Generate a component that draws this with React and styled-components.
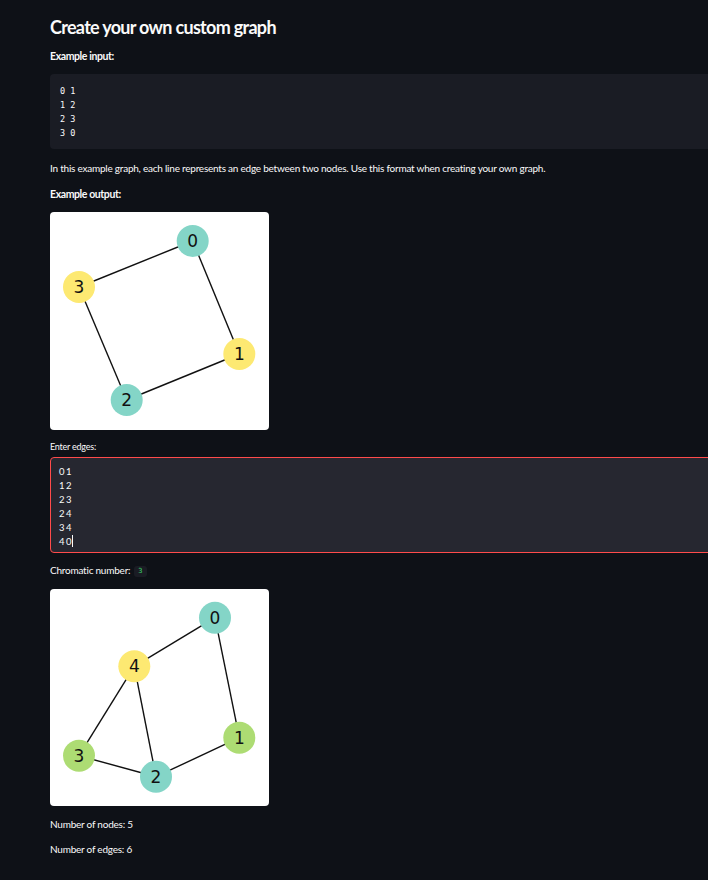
import React from "react";
import styled, { createGlobalStyle } from "styled-components";

const Global = createGlobalStyle`
  html, body { margin: 0; padding: 0; background: #0e1117; overflow: hidden; }
  body { font-family: Lato, "Noto Sans", sans-serif; color: #fafafa; }
`;

const Main = styled.main`
  width: 720px;
  padding: 0 0 0 50px;
  display: flex;
  flex-direction: column;
  align-items: flex-start;
`;

const Title = styled.h2`
  margin: 15px 0 0;
  font-size: 18px;
  line-height: 24px;
  font-weight: 700;
  letter-spacing: -0.7px;
`;

const Text = styled.p`
  margin: ${(p) => p.$mt}px 0 0;
  font-size: ${(p) => p.$size || 10}px;
  line-height: ${(p) => p.$lh || 14}px;
  font-weight: ${(p) => (p.$bold ? 700 : 400)};
  letter-spacing: ${(p) => (p.$bold ? -0.4 : -0.23)}px;
`;

const CodeBlock = styled.pre`
  margin: 11px 0 0;
  box-sizing: border-box;
  width: 100%;
  height: 75px;
  padding: 10px 10px 9px;
  background: #1a1c24;
  border-radius: 4px;
  font-family: "DejaVu Sans Mono", "Liberation Mono", monospace;
  font-size: 8.5px;
  line-height: 14px;
  color: #fafafa;
`;

const Figure = styled.div`
  margin-top: ${(p) => p.$mt}px;
  width: 219px;
  height: ${(p) => p.$h}px;
  background: #ffffff;
  border-radius: 4px;
  overflow: hidden;
`;

const Field = styled.div`
  margin-top: 4px;
  box-sizing: border-box;
  width: 100%;
  height: 96px;
  padding: 7px 8px 4px;
  background: #262730;
  border: 1px solid #ff4b4b;
  border-radius: 4px;
  font-size: 9.5px;
  line-height: 14px;
  letter-spacing: 1.4px;
  white-space: pre;
  color: #fafafa;
`;

const Caret = styled.span`
  display: inline-block;
  width: 1px;
  height: 12px;
  margin-left: -1px;
  vertical-align: -2px;
  background: #fafafa;
`;

const Badge = styled.code`
  display: inline-block;
  margin-left: 4px;
  padding: 0 4px;
  background: #1a1c24;
  border-radius: 3px;
  font-family: "DejaVu Sans Mono", monospace;
  font-size: 7px;
  line-height: 11px;
  letter-spacing: 0;
  color: #3dd56d;
  vertical-align: 1px;
`;

const COLORS = { teal: "#84d5c7", yellow: "#fde972", green: "#addc73" };

function Graph({ nodes, edges, width, height }) {
  return (
    <svg width={width} height={height} viewBox={`0 0 ${width} ${height}`}>
      {edges.map(([a, b]) => (
        <line
          key={`${a}-${b}`}
          x1={nodes[a].x}
          y1={nodes[a].y}
          x2={nodes[b].x}
          y2={nodes[b].y}
          stroke="#111"
          strokeWidth="1.4"
        />
      ))}
      {Object.entries(nodes).map(([id, n]) => (
        <g key={id}>
          <circle cx={n.x} cy={n.y} r="16" fill={COLORS[n.c]} />
          <text
            x={n.x}
            y={n.y + 6}
            textAnchor="middle"
            fontFamily="'DejaVu Sans', sans-serif"
            fontSize="17"
            fill="#111"
          >
            {id}
          </text>
        </g>
      ))}
    </svg>
  );
}

const graph1 = {
  nodes: {
    0: { x: 142.7, y: 29, c: "teal" },
    1: { x: 189.3, y: 142, c: "yellow" },
    2: { x: 76.7, y: 188, c: "teal" },
    3: { x: 29, y: 75, c: "yellow" },
  },
  edges: [
    [0, 1],
    [1, 2],
    [2, 3],
    [3, 0],
  ],
};

const graph2 = {
  nodes: {
    0: { x: 165, y: 28.7, c: "teal" },
    1: { x: 189.3, y: 148.7, c: "green" },
    2: { x: 106, y: 187.7, c: "teal" },
    3: { x: 29, y: 166.7, c: "green" },
    4: { x: 84.3, y: 77.3, c: "yellow" },
  },
  edges: [
    [0, 1],
    [1, 2],
    [2, 3],
    [2, 4],
    [3, 4],
    [4, 0],
  ],
};

export default function App() {
  return (
    <>
      <Global />
      <Main>
        <Title>Create your own custom graph</Title>
        <Text $mt={10} $size={10.5} $bold>
          Example input:
        </Text>
        <CodeBlock>{"0 1\n1 2\n2 3\n3 0"}</CodeBlock>
        <Text $mt={12}>
          In this example graph, each line represents an edge between two nodes. Use this format when creating your own graph.
        </Text>
        <Text $mt={12} $size={10.5} $bold>
          Example output:
        </Text>
        <Figure $mt={11} $h={218}>
          <Graph {...graph1} width={219} height={218} />
        </Figure>
        <Text $mt={11} $size={9} $lh={12}>
          Enter edges:
        </Text>
        <Field>
          {"01\n12\n23\n24\n34\n40"}
          <Caret />
        </Field>
        <Text $mt={10}>
          Chromatic number:<Badge>3</Badge>
        </Text>
        <Figure $mt={12} $h={217}>
          <Graph {...graph2} width={219} height={217} />
        </Figure>
        <Text $mt={11}>Number of nodes: 5</Text>
        <Text $mt={11}>Number of edges: 6</Text>
      </Main>
    </>
  );
}
